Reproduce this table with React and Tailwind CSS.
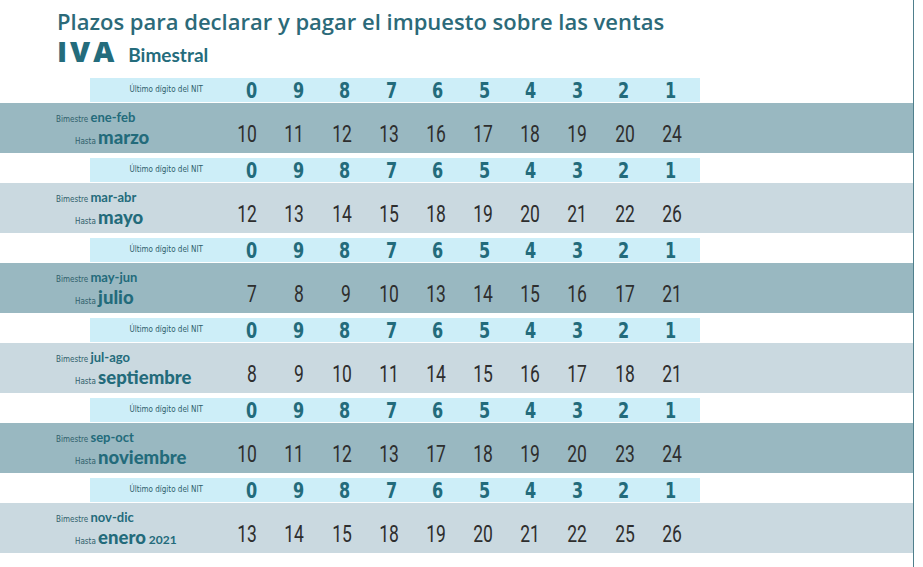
import React from 'react';

const narrow = { fontFamily: '"DejaVu Sans Condensed", "DejaVu Sans", sans-serif' };
const lato = { fontFamily: 'Lato, "Open Sans", sans-serif' };
const head = { fontFamily: '"Open Sans", "Noto Sans", sans-serif' };
const thin = { fontFamily: 'Roboto, "Liberation Sans", sans-serif' };

const digits = [0, 9, 8, 7, 6, 5, 4, 3, 2, 1];

const periods = [
  { bim: 'ene-feb', hasta: 'marzo', days: [10, 11, 12, 13, 16, 17, 18, 19, 20, 24], dark: true },
  { bim: 'mar-abr', hasta: 'mayo', days: [12, 13, 14, 15, 18, 19, 20, 21, 22, 26], dark: false },
  { bim: 'may-jun', hasta: 'julio', days: [7, 8, 9, 10, 13, 14, 15, 16, 17, 21], dark: true },
  { bim: 'jul-ago', hasta: 'septiembre', days: [8, 9, 10, 11, 14, 15, 16, 17, 18, 21], dark: false },
  { bim: 'sep-oct', hasta: 'noviembre', days: [10, 11, 12, 13, 17, 18, 19, 20, 23, 24], dark: true },
  { bim: 'nov-dic', hasta: 'enero', year: '2021', days: [13, 14, 15, 18, 19, 20, 21, 22, 25, 26], dark: false },
];

function DigitsRow() {
  return (
    <div className="ml-[90px] w-[610px] h-[24px] flex items-center bg-[#cdeef8]">
      <div className="w-[138.5px] pr-[25.5px] text-right text-[8px] text-[#2f5f6b]" style={narrow}>
        Último dígito del NIT
      </div>
      {digits.map((d) => (
        <div key={d} className="w-[46.5px] text-center leading-[24px] pt-[2px]">
          <span className="inline-block scale-x-[0.85] text-[21px] font-bold text-[#236b7b]" style={narrow}>
            {d}
          </span>
        </div>
      ))}
    </div>
  );
}

function PeriodRow({ p }) {
  return (
    <div className={`h-[50px] flex items-start ${p.dark ? 'bg-[#99b8c1]' : 'bg-[#cad9e0]'}`}>
      <div className="w-[209.8px] pt-[6px] text-[#236b7b]" style={lato}>
        <div className="pl-[56px] leading-[14px] whitespace-nowrap">
          <span className="text-[8px] text-[#2f5f6b]" style={narrow}>Bimestre </span>
          <span className="text-[13px] font-bold">{p.bim}</span>
        </div>
        <div className="pl-[75px] leading-[20px] whitespace-nowrap">
          <span className="text-[8px] text-[#2f5f6b]" style={narrow}>Hasta </span>
          <span className="text-[18.5px] font-black">{p.hasta}</span>
          {p.year && <span className="text-[12px] font-bold"> {p.year}</span>}
        </div>
      </div>
      {p.days.map((n, i) => (
        <div key={i} className="w-[47.2px] pt-[20px] text-right leading-[24px]">
          <span className="inline-block origin-right scale-x-[0.76] text-[23px] text-[#2e2e2e]" style={thin}>
            {n}
          </span>
        </div>
      ))}
    </div>
  );
}

export default function App() {
  return (
    <div className="w-[923px] h-[567px] bg-white overflow-hidden">
      <div className="w-[914px] h-[567px] border-r border-[#4f7f8c]">
        <div className="pl-[57px] pt-[9px]" style={head}>
          <h1 className="text-[22px] leading-[24px] font-semibold text-[#2c6a79]">
            Plazos para declarar y pagar el impuesto sobre las ventas
          </h1>
          <div className="mt-[2px] flex items-baseline gap-[11px] text-[#246c7c] h-[32px]">
            <span className="text-[29px] leading-[32px] font-extrabold tracking-[3px]">IVA</span>
            <span className="text-[19px] leading-[32px] font-bold" style={lato}>Bimestral</span>
          </div>
        </div>
        <div className="pt-[11px] flex flex-col">
          {periods.map((p) => (
            <div key={p.bim} className="flex flex-col gap-[1px] pb-[5px]">
              <DigitsRow />
              <PeriodRow p={p} />
            </div>
          ))}
        </div>
      </div>
    </div>
  );
}
